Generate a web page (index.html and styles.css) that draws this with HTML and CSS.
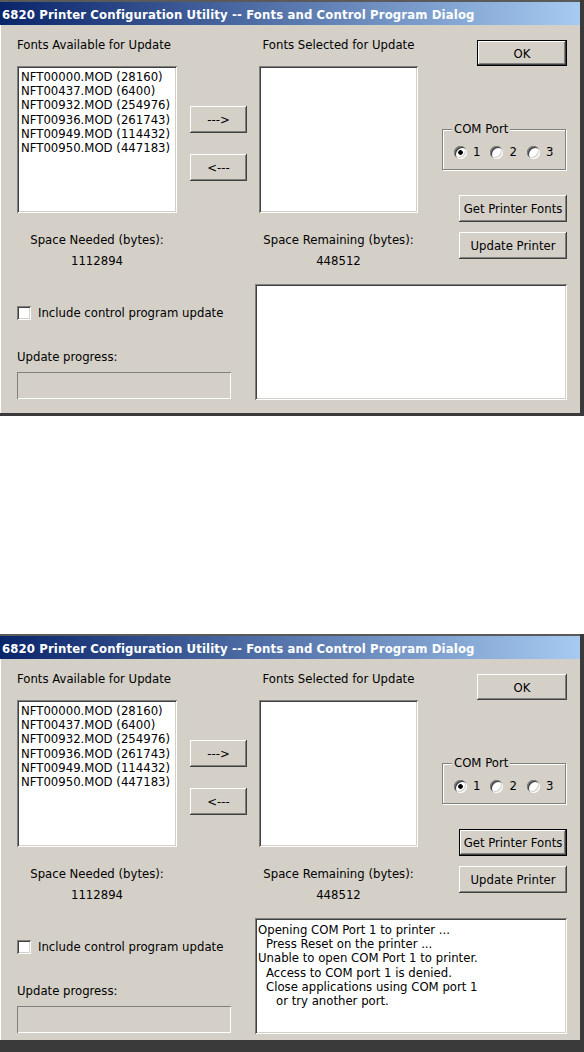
FILE: index.html
```html
<!DOCTYPE html>
<html lang="en">
<head>
    <meta charset="UTF-8">
    <meta name="viewport" content="width=device-width, initial-scale=1.0">
    <title>6820 Printer Configuration Utility</title>
    <link rel="stylesheet" href="styles.css">
</head>
<body>
    <!-- Before: nothing sent yet -->
    <div class="dialog">
        <div class="topline"></div>
        <div class="titlebar">6820 Printer Configuration Utility -- Fonts and Control Program Dialog</div>
        <div class="client">
            <div class="row">
                <div class="col-left">
                    <div class="label">Fonts Available for Update</div>
                    <div class="listbox">
                        <div>NFT00000.MOD (28160)</div>
                        <div>NFT00437.MOD (6400)</div>
                        <div>NFT00932.MOD (254976)</div>
                        <div>NFT00936.MOD (261743)</div>
                        <div>NFT00949.MOD (114432)</div>
                        <div>NFT00950.MOD (447183)</div>
                    </div>
                </div>
                <div class="arrows">
                    <button class="btn arrow">---&gt;</button>
                    <button class="btn arrow">&lt;---</button>
                </div>
                <div class="col-mid">
                    <div class="label center">Fonts Selected for Update</div>
                    <div class="listbox"></div>
                </div>
                <div class="col-right">
                    <button class="btn ok default">OK</button>
                    <div class="group">
                        <span class="legend">COM Port</span>
                        <div class="radios">
                            <span class="radio checked"></span><span class="rlabel">1</span>
                            <span class="radio"></span><span class="rlabel">2</span>
                            <span class="radio"></span><span class="rlabel">3</span>
                        </div>
                    </div>
                    <button class="btn wide fonts">Get Printer Fonts</button>
                </div>
            </div>

            <div class="row row-space">
                <div class="space">
                    <div class="label">Space Needed (bytes):</div>
                    <div class="label value">1112894</div>
                </div>
                <div class="space right">
                    <div class="label">Space Remaining (bytes):</div>
                    <div class="label value">448512</div>
                </div>
                <button class="btn wide update">Update Printer</button>
            </div>

            <div class="row row-bottom">
                <div class="col-progress">
                    <div class="check"><span class="box"></span>Include control program update</div>
                    <div class="label progress-label">Update progress:</div>
                    <div class="progress"></div>
                </div>
                <div class="log"></div>
            </div>
        </div>
    </div>

    <!-- After: Get Printer Fonts pressed -->
    <div class="dialog second">
        <div class="topline"></div>
        <div class="titlebar">6820 Printer Configuration Utility -- Fonts and Control Program Dialog</div>
        <div class="client">
            <div class="row">
                <div class="col-left">
                    <div class="label">Fonts Available for Update</div>
                    <div class="listbox">
                        <div>NFT00000.MOD (28160)</div>
                        <div>NFT00437.MOD (6400)</div>
                        <div>NFT00932.MOD (254976)</div>
                        <div>NFT00936.MOD (261743)</div>
                        <div>NFT00949.MOD (114432)</div>
                        <div>NFT00950.MOD (447183)</div>
                    </div>
                </div>
                <div class="arrows">
                    <button class="btn arrow">---&gt;</button>
                    <button class="btn arrow">&lt;---</button>
                </div>
                <div class="col-mid">
                    <div class="label center">Fonts Selected for Update</div>
                    <div class="listbox"></div>
                </div>
                <div class="col-right">
                    <button class="btn ok">OK</button>
                    <div class="group">
                        <span class="legend">COM Port</span>
                        <div class="radios">
                            <span class="radio checked"></span><span class="rlabel">1</span>
                            <span class="radio"></span><span class="rlabel">2</span>
                            <span class="radio"></span><span class="rlabel">3</span>
                        </div>
                    </div>
                    <button class="btn wide fonts default">Get Printer Fonts</button>
                </div>
            </div>

            <div class="row row-space">
                <div class="space">
                    <div class="label">Space Needed (bytes):</div>
                    <div class="label value">1112894</div>
                </div>
                <div class="space right">
                    <div class="label">Space Remaining (bytes):</div>
                    <div class="label value">448512</div>
                </div>
                <button class="btn wide update">Update Printer</button>
            </div>

            <div class="row row-bottom">
                <div class="col-progress">
                    <div class="check"><span class="box"></span>Include control program update</div>
                    <div class="label progress-label">Update progress:</div>
                    <div class="progress"></div>
                </div>
                <div class="log">
                    <div>Opening COM Port 1 to printer ...</div>
                    <div class="in1">Press Reset on the printer ...</div>
                    <div>Unable to open COM Port 1 to printer.</div>
                    <div class="in1">Access to COM port 1 is denied.</div>
                    <div class="in1">Close applications using COM port 1</div>
                    <div class="in2">or try another port.</div>
                </div>
            </div>
        </div>
    </div>
</body>
</html>
```

FILE: styles.css
```css
html, body {
    margin: 0;
    padding: 0;
    background: #fff;
}
body {
    font-family: "DejaVu Sans Condensed", "DejaVu Sans", sans-serif;
    font-stretch: condensed;
    font-size: 13px;
    color: #000;
}

/* window frame */
.dialog {
    width: 584px;
    box-sizing: border-box;
    background: #d4d0c8;
    border-right: 4px solid #3a3a3a;
    border-bottom: 3px solid #3a3a3a;
}
.dialog.second {
    margin-top: 218px;
    border-bottom-width: 12px;
}
.topline {
    height: 2px;
    background: #5a5a5a;
}
.titlebar {
    height: 22px;
    padding: 1px 0 0 2px;
    line-height: 23px;
    color: #fff;
    font-weight: bold;
    letter-spacing: 0.13px;
    white-space: nowrap;
    overflow: hidden;
    background: linear-gradient(to right, #0a246a, #a6caf0);
}
.client {
    height: 388px;
    box-sizing: border-box;
    padding: 13px 0 0 17px;
    box-shadow: inset 1px 0 0 #fff;
}
.second .client {
    height: 381px;
}

.row {
    display: flex;
    align-items: flex-start;
}
.label {
    line-height: 14px;
    white-space: nowrap;
}
.center {
    text-align: center;
}

/* sunken white boxes */
.listbox, .log {
    background: #fff;
    box-sizing: border-box;
    box-shadow: inset 1px 1px 0 #808080, inset -1px -1px 0 #fff,
                inset 2px 2px 0 #404040, inset -2px -2px 0 #d4d0c8;
    line-height: 14.2px;
    white-space: nowrap;
}
.listbox {
    height: 147px;
    margin-top: 14px;
    padding: 4px 0 0 4px;
}

/* buttons */
.btn {
    display: block;
    padding: 0;
    border: none;
    font: inherit;
    color: #000;
    background: #d4d0c8;
    box-shadow: inset -1px -1px 0 #404040, inset 1px 1px 0 #fff,
                inset -2px -2px 0 #808080, inset 2px 2px 0 #d4d0c8;
}
.btn.default {
    box-shadow: inset 0 0 0 1px #000, inset -2px -2px 0 #404040,
                inset 2px 2px 0 #fff, inset -3px -3px 0 #808080;
}

.col-left {
    width: 160px;
}
.arrows {
    width: 57px;
    margin-left: 13px;
    padding-top: 68px;
}
.arrow {
    width: 57px;
    height: 27px;
}
.arrow + .arrow {
    margin-top: 21px;
}
.col-mid {
    width: 159px;
    margin-left: 12px;
}
.col-right {
    width: 125px;
    margin-left: 24px;
}
.ok {
    width: 90px;
    height: 26px;
    margin: 2px 0 0 35px;
}
.wide {
    width: 108px;
    height: 27px;
}
.fonts {
    margin: 25px 0 0 17px;
}

/* COM port group */
.group {
    position: relative;
    width: 124px;
    height: 41px;
    box-sizing: border-box;
    margin-top: 63px;
    border: 1px solid #808080;
    box-shadow: inset 1px 1px 0 #fff, 1px 1px 0 #fff;
}
.legend {
    position: absolute;
    top: -8px;
    left: 9px;
    padding: 0 2px;
    line-height: 14px;
    background: #d4d0c8;
}
.radios {
    display: flex;
    align-items: center;
    padding: 15px 0 0 11px;
}
.radio {
    width: 13px;
    height: 13px;
    border-radius: 50%;
    background: #fff;
    box-shadow: inset 1px 1px 0 #808080, inset -1px -1px 0 #fff,
                inset 2px 2px 0 #404040, inset -2px -2px 0 #d4d0c8;
}
.radio.checked {
    background: radial-gradient(circle, #000 2px, #fff 2.6px);
}
.rlabel {
    margin: 0 10px 0 6px;
    line-height: 14px;
}

/* space labels */
.row-space {
    margin-top: 10px;
}
.space {
    width: 160px;
    margin-top: 1px;
    text-align: center;
}
.space.right {
    width: 159px;
    margin-left: 82px;
}
.value {
    margin-top: 7px;
}
.update {
    margin-left: 41px;
}

/* bottom part */
.row-bottom {
    margin-top: 16px;
}
.col-progress {
    width: 214px;
}
.check {
    display: flex;
    align-items: center;
    margin-top: 22px;
    line-height: 14px;
    white-space: nowrap;
}
.box {
    width: 14px;
    height: 14px;
    margin-right: 7px;
    background: #fff;
    box-shadow: inset 1px 1px 0 #808080, inset -1px -1px 0 #fff,
                inset 2px 2px 0 #404040, inset -2px -2px 0 #d4d0c8;
}
.progress-label {
    margin-top: 29.5px;
}
.progress {
    height: 27px;
    margin-top: 8.5px;
    box-sizing: border-box;
    box-shadow: inset 1px 1px 0 #808080, inset -1px -1px 0 #fff;
}
.log {
    width: 312px;
    height: 116px;
    margin-left: 24px;
    padding: 5px 0 0 3px;
}
.in1 {
    padding-left: 8px;
}
.in2 {
    padding-left: 18px;
}
```
